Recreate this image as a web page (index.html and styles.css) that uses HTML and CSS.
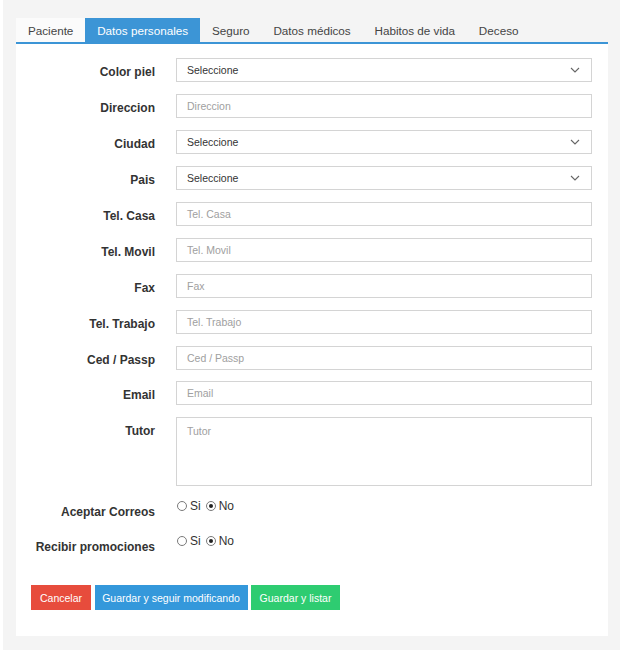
FILE: index.html
```html
<!DOCTYPE html>
<html lang="es">
<head>
<meta charset="utf-8">
<title>Datos personales</title>
<link rel="stylesheet" href="styles.css">
</head>
<body>
<div class="page">
  <div class="panel">
    <ul class="tabs">
      <li class="tab tab-light">Paciente</li>
      <li class="tab active">Datos personales</li>
      <li class="tab">Seguro</li>
      <li class="tab">Datos médicos</li>
      <li class="tab">Habitos de vida</li>
      <li class="tab">Deceso</li>
    </ul>
    <div class="body">
      <div class="form">
        <label class="lbl">Color piel</label>
        <div class="field select"><span>Seleccione</span><svg class="chev" width="10" height="6" viewBox="0 0 10 6"><polyline points="1,1 5,5 9,1" fill="none" stroke="#666" stroke-width="1.1"/></svg></div>

        <label class="lbl">Direccion</label>
        <div class="field ph">Direccion</div>

        <label class="lbl">Ciudad</label>
        <div class="field select"><span>Seleccione</span><svg class="chev" width="10" height="6" viewBox="0 0 10 6"><polyline points="1,1 5,5 9,1" fill="none" stroke="#666" stroke-width="1.1"/></svg></div>

        <label class="lbl">Pais</label>
        <div class="field select"><span>Seleccione</span><svg class="chev" width="10" height="6" viewBox="0 0 10 6"><polyline points="1,1 5,5 9,1" fill="none" stroke="#666" stroke-width="1.1"/></svg></div>

        <label class="lbl">Tel. Casa</label>
        <div class="field ph">Tel. Casa</div>

        <label class="lbl">Tel. Movil</label>
        <div class="field ph">Tel. Movil</div>

        <label class="lbl">Fax</label>
        <div class="field ph">Fax</div>

        <label class="lbl">Tel. Trabajo</label>
        <div class="field ph">Tel. Trabajo</div>

        <label class="lbl">Ced / Passp</label>
        <div class="field ph">Ced / Passp</div>

        <label class="lbl">Email</label>
        <div class="field ph">Email</div>

        <label class="lbl">Tutor</label>
        <div class="field ph area">Tutor</div>

        <label class="lbl">Aceptar Correos</label>
        <div class="radios"><span class="radio"></span><span class="rtxt">Si</span><span class="radio on"></span><span class="rtxt">No</span></div>

        <label class="lbl">Recibir promociones</label>
        <div class="radios"><span class="radio"></span><span class="rtxt">Si</span><span class="radio on"></span><span class="rtxt">No</span></div>
      </div>
      <div class="actions">
        <button class="btn btn-red">Cancelar</button>
        <button class="btn btn-blue">Guardar y seguir modificando</button>
        <button class="btn btn-green">Guardar y listar</button>
      </div>
    </div>
  </div>
</div>
</body>
</html>
```

FILE: styles.css
```css
html, body {
  margin: 0;
  padding: 0;
  background: #ffffff;
}
body {
  font-family: "Liberation Sans", Arial, sans-serif;
  color: #333;
}
.page {
  margin-left: 3px;
  width: 617px;
  height: 650px;
  background: #f4f4f4;
  padding: 18px 0 0 13px;
  box-sizing: border-box;
}
.panel {
  width: 592px;
}
.tabs {
  list-style: none;
  margin: 0;
  padding: 0;
  display: flex;
  border-bottom: 2px solid #3c95d6;
}
.tab {
  height: 24px;
  line-height: 26px;
  padding: 0 11.9px;
  font-size: 11.7px;
  color: #444;
}
.tab-light {
  background: #fbfbfb;
}
.tab.active {
  background: #3c95d6;
  color: #fff;
}
.body {
  background: #fff;
  height: 592px;
  box-sizing: border-box;
  padding-top: 14px;
}
.form {
  display: grid;
  grid-template-columns: 139px 416px;
  column-gap: 21px;
  row-gap: 11.95px;
}
.lbl {
  text-align: right;
  font-weight: bold;
  font-size: 12px;
  line-height: 14px;
  padding-top: 7px;
  color: #333;
}
.field {
  height: 24px;
  box-sizing: border-box;
  border: 1px solid #d4d4d4;
  padding: 0 10px;
  font-size: 10.5px;
  line-height: 22px;
  color: #333;
  display: flex;
  align-items: center;
}
.field.ph {
  color: #a0a0a0;
}
.field.select {
  justify-content: space-between;
}
.chev {
  margin-right: 1px;
}
.field.area {
  height: 69px;
  align-items: flex-start;
  padding-top: 2px;
}
.radios {
  display: flex;
  align-items: center;
  height: 16px;
  font-size: 12px;
  color: #333;
  margin-bottom: 7px;
}
.radio {
  width: 10px;
  height: 10px;
  box-sizing: border-box;
  border: 1px solid #7a7a7a;
  border-radius: 50%;
  margin: 0 3px 0 1px;
  position: relative;
}
.radio.on::after {
  content: "";
  position: absolute;
  left: 2px;
  top: 2px;
  width: 4px;
  height: 4px;
  border-radius: 50%;
  background: #222;
}
.rtxt {
  margin-right: 4px;
}
.actions {
  margin-top: 29px;
  padding-left: 15px;
  display: flex;
  gap: 3.5px;
}
.btn {
  border: none;
  height: 25px;
  padding: 0;
  font-family: "Liberation Sans", Arial, sans-serif;
  font-size: 10.5px;
  color: #fff;
}
.btn-red { background: #e74c3c; width: 60px; }
.btn-blue { background: #3498db; width: 153px; }
.btn-green { background: #2ecc71; width: 89px; }
```
